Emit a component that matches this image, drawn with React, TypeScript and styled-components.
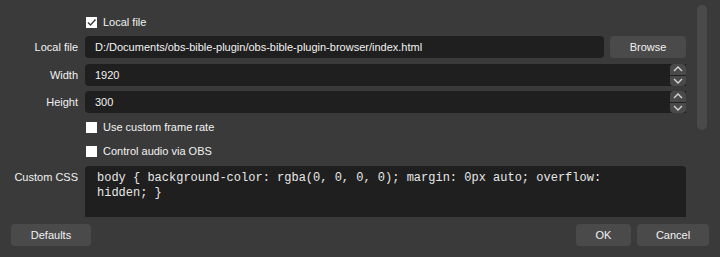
import React from 'react';
import styled, { createGlobalStyle } from 'styled-components';

const GlobalStyle = createGlobalStyle`
  html, body {
    margin: 0;
    padding: 0;
    background: #3a3a3a;
  }
  body {
    font-family: "Liberation Sans", Arial, sans-serif;
    font-size: 11px;
    color: #f2f2f2;
  }
`;

const customCss = 'body { background-color: rgba(0, 0, 0, 0); margin: 0px auto; overflow: hidden; }';

const Window = styled.div`
  width: 720px;
  height: 257px;
  display: flex;
  flex-direction: column;
  background: #3a3a3a;
  overflow: hidden;
`;

const ScrollArea = styled.div`
  height: 217px;
  display: flex;
  overflow: hidden;
`;

const Form = styled.div`
  width: 686px;
  box-sizing: border-box;
  padding: 11px 0 0 8px;
  display: grid;
  grid-template-columns: 70px 601px;
  grid-template-rows: 25px 28px 27px 25px 24px 26px auto;
  column-gap: 7px;
  align-items: start;
`;

const Label = styled.div`
  height: 22px;
  line-height: 23px;
  text-align: right;
  white-space: nowrap;
`;

const Field = styled.div`
  grid-column: 2;
  display: flex;
  gap: 6px;
  height: 22px;
  align-items: center;
`;

const CheckRow = styled.label`
  grid-column: 2;
  height: 22px;
  display: flex;
  align-items: center;
  gap: 6px;
  padding-left: 1px;
`;

const Box = styled.span`
  width: 11px;
  height: 11px;
  background: #ffffff;
  display: flex;
  align-items: center;
  justify-content: center;
`;

const TextInput = styled.div`
  flex: 1;
  height: 22px;
  line-height: 22px;
  box-sizing: border-box;
  padding-left: 10px;
  background: #1f1f1f;
  border-radius: 4px;
  white-space: nowrap;
  overflow: hidden;
`;

const SpinInput = styled(TextInput)`
  border-radius: 4px 0 0 4px;
`;

const Spinner = styled.div`
  width: 16px;
  height: 22px;
  display: flex;
  flex-direction: column;
  gap: 1px;
  margin-left: -6px;
  background: #1f1f1f;
`;

const SpinButton = styled.div<{ $up?: boolean }>`
  flex: 1;
  background: #4a4a4a;
  border-radius: ${({ $up }) => ($up ? '4px 4px 0 0' : '0 0 4px 4px')};
  display: flex;
  align-items: center;
  justify-content: center;
`;

const Button = styled.button<{ $width: number }>`
  width: ${({ $width }) => $width}px;
  height: 22px;
  padding: 0;
  border: none;
  border-radius: 4px;
  background: #4a4a4a;
  color: #f2f2f2;
  font-family: inherit;
  font-size: 11px;
`;

const CodeArea = styled.div`
  grid-column: 2;
  height: 80px;
  box-sizing: border-box;
  padding: 5px 40px 0 12px;
  background: #1f1f1f;
  border-radius: 4px;
  font-family: "Liberation Mono", "Courier New", monospace;
  font-size: 12px;
  line-height: 15px;
  color: #e8e8e8;
`;

const ScrollTrack = styled.div`
  width: 10px;
  margin-left: 11px;
  padding-top: 5px;
`;

const ScrollHandle = styled.div`
  height: 125px;
  border-radius: 5px;
  background: #4a4a4a;
`;

const ButtonBar = styled.div`
  flex: 1;
  display: flex;
  align-items: flex-start;
  padding: 7px 11px 0 11px;
  gap: 6px;
`;

const Spacer = styled.div`
  flex: 1;
`;

const Check = ({ checked }: { checked?: boolean }) => (
  <Box>
    {checked && (
      <svg width="11" height="11" viewBox="0 0 11 11">
        <polyline points="2,5.5 4.5,8 9.5,2.5" fill="none" stroke="#3a3a3a" strokeWidth="1.4" />
      </svg>
    )}
  </Box>
);

const Chevron = ({ up }: { up?: boolean }) => (
  <svg width="10" height="6" viewBox="0 0 10 6">
    <polyline
      points={up ? '1,5 5,1 9,5' : '1,1 5,5 9,1'}
      fill="none"
      stroke="#d8d8d8"
      strokeWidth="1.3"
    />
  </svg>
);

const NumberField = ({ value }: { value: string }) => (
  <Field>
    <SpinInput>{value}</SpinInput>
    <Spinner>
      <SpinButton $up>
        <Chevron up />
      </SpinButton>
      <SpinButton>
        <Chevron />
      </SpinButton>
    </Spinner>
  </Field>
);

export default function App() {
  return (
    <Window>
      <GlobalStyle />
      <ScrollArea>
        <Form>
          <CheckRow>
            <Check checked />
            Local file
          </CheckRow>

          <Label>Local file</Label>
          <Field>
            <TextInput>D:/Documents/obs-bible-plugin/obs-bible-plugin-browser/index.html</TextInput>
            <Button $width={76}>Browse</Button>
          </Field>

          <Label>Width</Label>
          <NumberField value="1920" />

          <Label>Height</Label>
          <NumberField value="300" />

          <CheckRow>
            <Check />
            Use custom frame rate
          </CheckRow>

          <CheckRow>
            <Check />
            Control audio via OBS
          </CheckRow>

          <Label>Custom CSS</Label>
          <CodeArea>{customCss}</CodeArea>
        </Form>
        <ScrollTrack>
          <ScrollHandle />
        </ScrollTrack>
      </ScrollArea>
      <ButtonBar>
        <Button $width={80}>Defaults</Button>
        <Spacer />
        <Button $width={55}>OK</Button>
        <Button $width={72}>Cancel</Button>
      </ButtonBar>
    </Window>
  );
}
